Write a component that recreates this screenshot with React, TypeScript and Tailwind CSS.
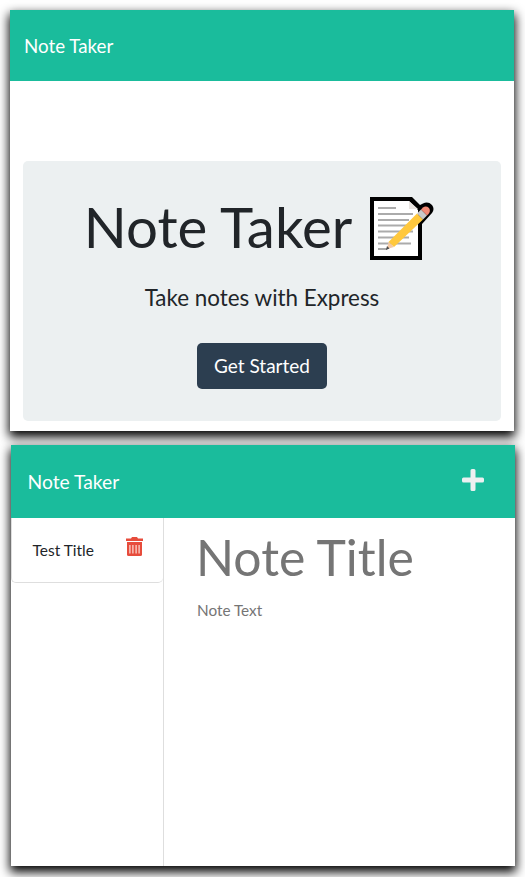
function NotepadIcon() {
  return (
    <svg className="h-[65px] w-[66px] shrink-0" viewBox="0 0 66 65" fill="none" aria-hidden="true">
      <path d="M0 0H42L50 8L53 6.500Q58 4 62 8Q65 12 62 16L52 27V63H0Z" fill="#000" />
      <path d="M4 4H39L48 13V59H4Z" fill="#fff" />
      <path d="M39 4L48 12H39Z" fill="#e9e4e1" />
      <path d="M8 11H26M8 17H43M8 23H39M8 28.500H40M8 34.500H43M8 40.500H39M8 46.500H41M8 52H17" stroke="#ababab" strokeWidth="1.9" />
      <path d="M18.500 45L47 16.500L53 22.500L24 50Z" fill="#ffc83d" />
      <path d="M47 16.500L51 12.500L57 18.500L53 22.500Z" fill="#c9c9c9" />
      <path d="M51 12.500L53 10.500Q56 8.500 59 11Q61 14 58.500 17L57 18.500Z" fill="#f28a75" />
      <path d="M18.500 45L24 50L17 52Z" fill="#f4c9a5" />
      <path d="M17 49L19.500 51.500L16 53Z" fill="#4a4a4a" />
    </svg>
  );
}

function TrashIcon() {
  return (
    <svg className="h-[19px] w-[17px]" viewBox="0 0 17 19" aria-hidden="true">
      <path d="M0 1.500H5L6 0H11L12 1.500H17V4H0Z" fill="#e74c3c" />
      <path d="M1 5H16V17.500Q16 19 14.500 19H2.500Q1 19 1 17.500Z" fill="#e74c3c" />
      <path d="M3.900 8V16.500M6.900 8V16.500M10.100 8V16.500M13.100 8V16.500" stroke="#fbd3cc" strokeWidth="1.300" />
    </svg>
  );
}

function PlusIcon() {
  return (
    <svg className="h-[22px] w-[22px]" viewBox="0 0 22 22" aria-hidden="true">
      <path d="M10 0H12Q13.500 0 13.500 1.500V8.500H20.500Q22 8.500 22 10V12Q22 13.500 20.500 13.500H13.500V20.500Q13.500 22 12 22H10Q8.500 22 8.500 20.500V13.500H1.500Q0 13.500 0 12V10Q0 8.500 1.500 8.500H8.500V1.500Q8.500 0 10 0Z" fill="#ecf0f1" />
    </svg>
  );
}

export default function App() {
  return (
    <main className="h-[877px] w-[525px] overflow-hidden bg-white pt-[10px] font-['Lato',sans-serif] text-[#212529]">
      <section className="ml-[10px] h-[421px] w-[504px] bg-white shadow-[0_5px_10px_1px_#000]">
        <header className="flex h-[71px] items-center bg-[#1abc9c] pt-[2px] pl-[14px] text-[18.750px] text-white">Note Taker</header>
        <div className="mx-[13px] mt-20 flex h-[260px] flex-col items-center rounded-[5px] bg-[#ecf0f1] pt-[36px]">
          <h1 className="flex h-[66px] items-start pr-[3px] text-[56.400px] leading-[58px]">
            <span className="mr-[18px] -ml-px">Note Taker</span>
            <NotepadIcon />
          </h1>
          <p className="mt-[18px] text-[22.400px] leading-[34px]">Take notes with Express</p>
          <button className="mt-[28px] h-[46px] w-[130px] rounded-[5px] bg-[#2c3e50] text-[19px] text-white">Get Started</button>
        </div>
      </section>

      <section className="mt-[14px] ml-[11px] flex h-[421px] w-[504px] flex-col bg-white shadow-[0_5px_10px_1px_#000]">
        <header className="flex h-[73px] shrink-0 items-center justify-between bg-[#1abc9c] pr-[31px] pl-[16.500px] text-[19.300px] text-white">
          <span className="pt-[2px]">Note Taker</span>
          <button className="mb-[3px]" aria-label="New note"><PlusIcon /></button>
        </header>
        <div className="flex flex-1">
          <aside className="w-[153px] border-r border-[#dedede]">
            <div className="flex h-[65px] items-center justify-between rounded-b-[5px] border-b border-l border-[#dedede] pr-[20px] pl-[20.500px] text-[15.500px]">
              <span className="pt-[2px]">Test Title</span>
              <button className="mb-[7px]" aria-label="Delete note"><TrashIcon /></button>
            </div>
          </aside>
          <div className="flex-1 pt-[8px] pl-[32px] text-[#757575]">
            <h2 className="text-[49.900px] leading-[62px]">Note Title</h2>
            <p className="mt-[10px] pl-px text-[15.300px] leading-6">Note Text</p>
          </div>
        </div>
      </section>
    </main>
  );
}
